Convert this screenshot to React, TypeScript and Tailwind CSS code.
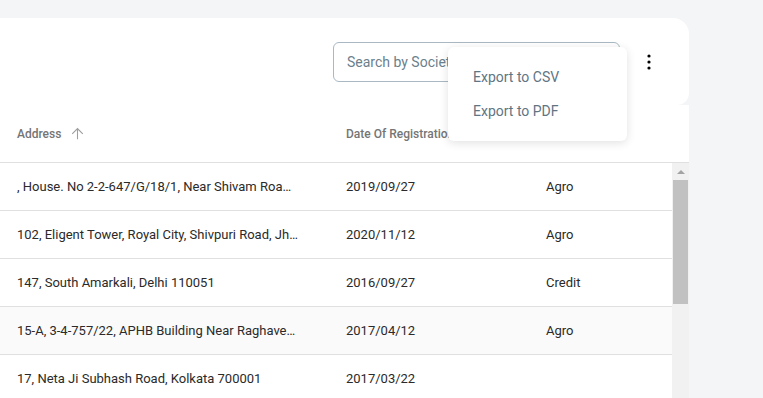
const rows = [
  { address: ", House. No 2-2-647/G/18/1, Near Shivam Road, Hyderabad 500013", date: "2019/09/27", type: "Agro" },
  { address: "102, Eligent Tower, Royal City, Shivpuri Road, Jhansi 284003", date: "2020/11/12", type: "Agro" },
  { address: "147, South Amarkali, Delhi 110051", date: "2016/09/27", type: "Credit" },
  { address: "15-A, 3-4-757/22, APHB Building Near Raghavendra Swamy Temple", date: "2017/04/12", type: "Agro", hover: true },
  { address: "17, Neta Ji Subhash Road, Kolkata 700001", date: "2017/03/22", type: "" },
];

function Kebab() {
  return (
    <svg width="4" height="16" viewBox="0 0 4 16" className="text-black">
      <circle cx="2" cy="2" r="1.6" fill="currentColor" />
      <circle cx="2" cy="8" r="1.6" fill="currentColor" />
      <circle cx="2" cy="14" r="1.6" fill="currentColor" />
    </svg>
  );
}

function SortArrow() {
  return (
    <svg width="17" height="17" viewBox="0 0 24 24" className="text-[#9e9e9e]">
      <path fill="currentColor" d="M4 12l1.06 1.06L11.25 6.9V20h1.5V6.9l6.19 6.16L20 12l-8-8-8 8z" />
    </svg>
  );
}

export default function App() {
  return (
    <div
      className="relative h-[398px] w-[763px] overflow-hidden bg-[#f4f5f7] pt-[18px]"
      style={{ fontFamily: "Roboto, 'Liberation Sans', sans-serif" }}
    >
      <div className="w-[689px]">
        {/* toolbar */}
        <div className="flex h-[87px] items-start justify-end rounded-tr-2xl rounded-br-xl bg-white pt-[24px] pr-[38px]">
          <div className="flex h-[40px] w-[287px] items-center rounded-md border border-[#a9b8c2] px-[13px] text-[14px] text-[#6b7f8c]">
            Search by Society name
          </div>
          <div className="ml-[27px] flex h-[40px] items-center">
            <Kebab />
          </div>
        </div>

        {/* table header */}
        <div className="flex h-[58px] items-center border-b border-[#e0e0e0] bg-white text-[12px] font-medium text-[#757575]">
          <div className="flex w-[346px] items-center gap-[8px] pl-[17px]">
            <span>Address</span>
            <SortArrow />
          </div>
          <div className="w-[200px]">Date Of Registration</div>
          <div>Type</div>
        </div>

        {/* body */}
        <div className="flex bg-white">
          <div className="w-[672px]">
            {rows.map((r) => (
              <div
                key={r.date}
                className={`flex h-[48px] items-center border-b border-[#e0e0e0] text-[13px] text-[#2a2a2a] ${r.hover ? "bg-[#fafafa]" : "bg-white"}`}
              >
                <div className="w-[346px] truncate pr-[48px] pl-[17px]">{r.address}</div>
                <div className="w-[200px]">{r.date}</div>
                <div>{r.type}</div>
              </div>
            ))}
          </div>
          <div className="flex w-[17px] flex-col items-center bg-[#f1f1f1]">
            <div className="flex h-[17px] items-center justify-center">
              <div className="h-0 w-0 border-x-[4px] border-b-[4px] border-x-transparent border-b-[#a3a3a3]" />
            </div>
            <div className="h-[124px] w-[15px] bg-[#c1c1c1]" />
          </div>
        </div>
      </div>

      {/* menu */}
      <div className="absolute top-[47px] left-[448px] w-[179px] rounded-md bg-white py-[13px] shadow-[0_2px_10px_rgba(0,0,0,0.12)]">
        <div className="flex h-[34px] items-center pl-[25px] text-[14px] text-[#5f7583]">Export to CSV</div>
        <div className="flex h-[34px] items-center pl-[25px] text-[14px] text-[#5f7583]">Export to PDF</div>
      </div>
    </div>
  );
}
